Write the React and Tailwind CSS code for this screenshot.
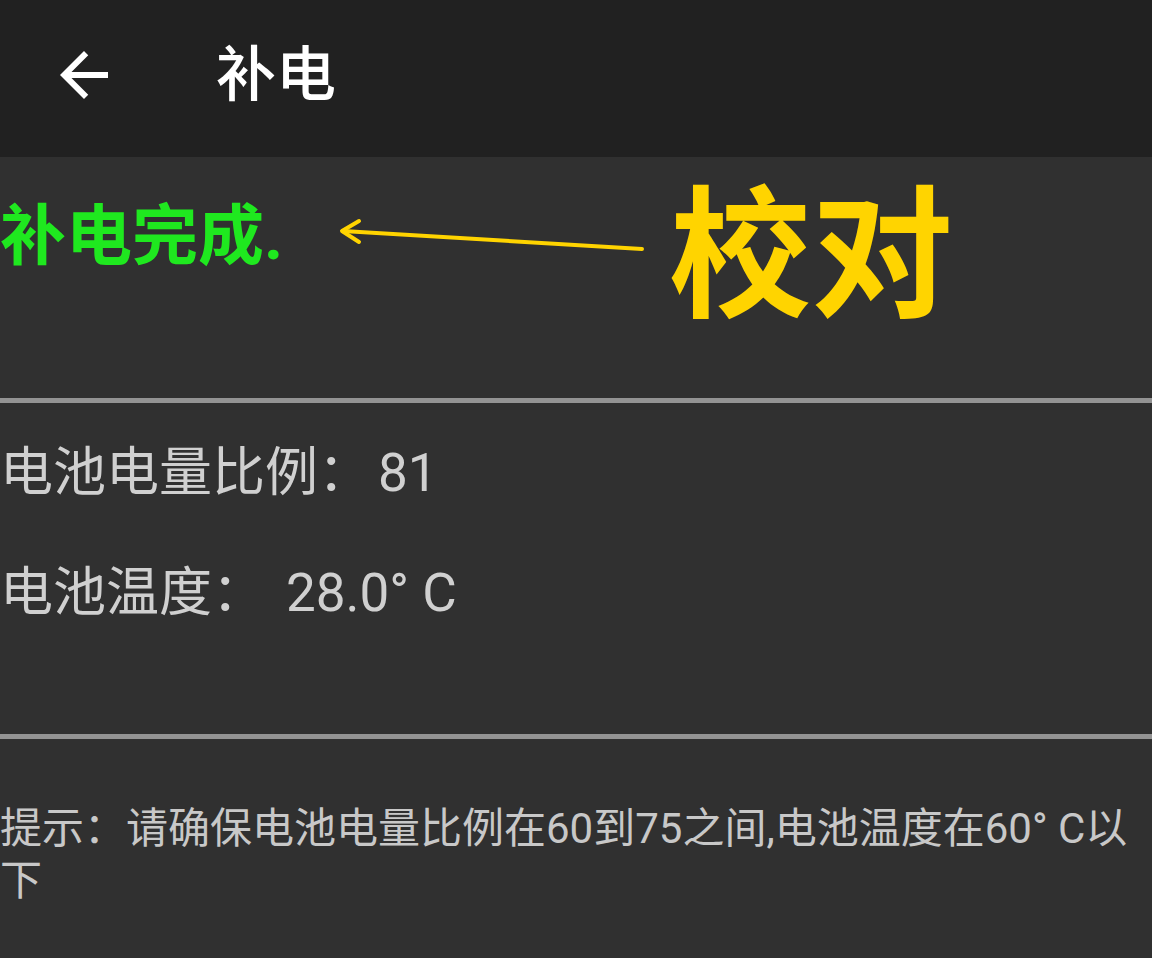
import React from "react";

const font = { fontFamily: "Roboto, 'Noto Sans CJK SC', sans-serif" };

export default function App() {
  return (
    <div
      className="relative w-[1152px] h-[958px] overflow-hidden bg-[#303030] font-['Roboto','Noto_Sans_CJK_SC',sans-serif]"
      style={font}
    >
      {/* Header */}
      <div className="flex items-center h-[157px] bg-[#212121]">
        <svg
          viewBox="0 0 24 24"
          className="w-[72px] h-[72px] ml-[48px] mt-[-7px]"
          fill="#ffffff"
        >
          <path d="M20 11H7.83l5.59-5.59L12 4l-8 8 8 8 1.41-1.41L7.83 13H20v-2z" />
        </svg>
        <div className="ml-[96px] mt-[-6px] text-white text-[60px] leading-[70px] font-medium">
          补电
        </div>
      </div>

      {/* Section 1 */}
      <div className="h-[241px] pt-[40px]">
        <div className="text-[#1fe81f] text-[66px] leading-[79px] font-bold">
          补电完成.
        </div>
      </div>

      <div className="h-[5px] bg-[#939393]" />

      {/* Section 2 */}
      <div className="h-[331px] pt-[40px] text-[#d0d0d0] text-[53px] whitespace-pre">
        <div className="leading-[60px]">
          电池电量比例：<span className="ml-[7px]">81</span>
        </div>
        <div className="leading-[60px] mt-[60px]">
          电池温度：<span className="ml-[21px]">28.0° C</span>
        </div>
      </div>

      <div className="h-[5px] bg-[#939393]" />

      {/* Section 3 */}
      <div className="pt-[64px] text-[#c8c8c8] text-[42px] leading-[52px] pr-[10px]">
        提示：请确保电池电量比例在60到75之间,电池温度在60° C以下
      </div>

      {/* Annotation overlay */}
      <div className="absolute left-[669px] top-[168px] text-[#ffd400] text-[142px] leading-[180px] font-bold">
        校对
      </div>
      <svg
        className="absolute left-0 top-0 pointer-events-none"
        width="1152"
        height="958"
        viewBox="0 0 1152 958"
      >
        <path
          d="M642 249 L343 231"
          stroke="#ffd400"
          strokeWidth="4"
          strokeLinecap="round"
          fill="none"
        />
        <path
          d="M359 221 L342 231 L359 242"
          stroke="#ffd400"
          strokeWidth="4"
          strokeLinecap="round"
          strokeLinejoin="round"
          fill="none"
        />
      </svg>
    </div>
  );
}
